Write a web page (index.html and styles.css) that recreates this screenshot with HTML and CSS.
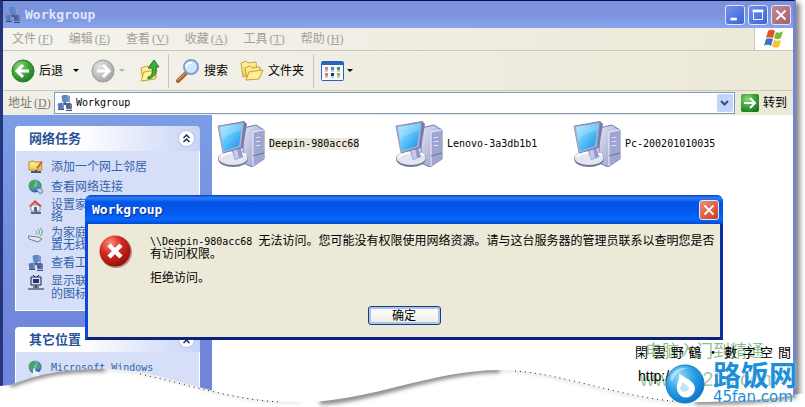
FILE: index.html
```html
<!DOCTYPE html>
<html lang="zh-CN">
<head>
  <meta charset="UTF-8">
  <title>Workgroup</title>
  <link rel="stylesheet" href="styles.css">
</head>
<body>
  <!-- shared icons -->
  <svg class="defs" width="0" height="0" aria-hidden="true">
    <defs>
      <linearGradient id="screen" x1="0" y1="0" x2="1" y2="1">
        <stop offset="0" stop-color="#a4e6ff"/><stop offset="0.5" stop-color="#55c2fa"/><stop offset="1" stop-color="#1c86e2"/>
      </linearGradient>
      <linearGradient id="case" x1="0" y1="0" x2="1" y2="1">
        <stop offset="0" stop-color="#e2e4f6"/><stop offset="1" stop-color="#8d92bd"/>
      </linearGradient>
      <radialGradient id="green" cx="0.35" cy="0.3" r="0.8">
        <stop offset="0" stop-color="#8fdc7c"/><stop offset="0.5" stop-color="#3fa63a"/><stop offset="1" stop-color="#1c7420"/>
      </radialGradient>
      <radialGradient id="gray" cx="0.35" cy="0.3" r="0.8">
        <stop offset="0" stop-color="#e4e4e4"/><stop offset="1" stop-color="#a0a0a0"/>
      </radialGradient>
      <radialGradient id="red" cx="0.35" cy="0.25" r="0.8">
        <stop offset="0" stop-color="#f59080"/><stop offset="0.45" stop-color="#d62a20"/><stop offset="1" stop-color="#8c0f0c"/>
      </radialGradient>
      <radialGradient id="globe" cx="0.35" cy="0.3" r="0.8">
        <stop offset="0" stop-color="#9fd8ff"/><stop offset="1" stop-color="#124a9c"/>
      </radialGradient>
      <linearGradient id="folder" x1="0" y1="0" x2="0" y2="1">
        <stop offset="0" stop-color="#fff5a8"/><stop offset="1" stop-color="#f0cb50"/>
      </linearGradient>
      <symbol id="net" viewBox="0 0 16 16">
        <path d="M8 6v4M4 11l4-3 5 3" stroke="#4a5a80" stroke-width="1.500" fill="none"/>
        <path d="M5 1l5-1 1 6-5 1z" fill="#4a90dc" stroke="#6b7aa4"/>
        <path d="M10 0l3 1v6l-2 0z" fill="#8d97bd"/>
        <path d="M1 9l4-1 1 5-4 1z" fill="#3a80d0" stroke="#6b7aa4"/>
        <path d="M5 8l2 1v5l-2 0z" fill="#7f89b0"/>
        <path d="M9 9l4-1 1 5-4 1z" fill="#3468b4" stroke="#55628a"/>
        <path d="M13 8l2 1v5l-2 1z" fill="#6f7aa2"/>
        <path d="M1 14h6v1H1zM9 15h6v1H9z" fill="#3f4a6c"/>
      </symbol>
      <symbol id="pc" viewBox="0 0 48 46">
        <path d="M26 7l13-3 8 5v29l-12 8-9-4z" fill="url(#case)" stroke="#7379a6"/>
        <path d="M36 11l11-2v29l-11 8z" fill="#a0a6d2"/>
        <path d="M36 11l11-2M36 11v34" stroke="#eef0ff" fill="none"/>
        <path d="M38 16l6-1v2l-6 1zM38 20l6-1v2l-6 1zM38 24l6-1v2l-6 1z" fill="#e4e7fa" stroke="#767daf" stroke-width=".5"/>
        <path d="M36 35l11-3" stroke="#686fa0"/>
        <circle cx="43" cy="36" r="1" fill="#68d26a"/>
        <ellipse cx="16" cy="38" rx="15" ry="8" fill="#73779a"/>
        <ellipse cx="16" cy="37" rx="14.500" ry="7" fill="#e3e5f1"/>
        <path d="M4 36c5-5 18-6 25-2" stroke="#fff" fill="none" stroke-width="2"/>
        <path d="M14 27l9-3 3 12-8 3z" fill="#9299cb"/>
        <path d="M16 28l4-1 2 10-4 1z" fill="#c5c9ec"/>
        <path d="M1 5l26-5 3 3-4 24-19 5z" fill="#747cae"/>
        <path d="M1 5l26-4-3 25-18 6z" fill="#a9b3d8" stroke="#7a84b2" stroke-width=".7"/>
        <path d="M3 6l22-3-3 22-15 5z" fill="url(#screen)"/>
        <path d="M3 6l22-3-1 7C15 11 9 15 5 20z" fill="#fff" opacity=".2"/>
      </symbol>
      <symbol id="earth" viewBox="0 0 16 16">
        <circle cx="7" cy="7" r="6.500" fill="url(#globe)"/>
        <path d="M3 2c3-2 5 0 5 1S5 6 6 8s-1 4-2 3-3-3-3-5 1-3 2-4zM10 3c2 1 3 3 3 5l-3 1-1-3z" fill="#48a94b"/>
      </symbol>
    </defs>
  </svg>

  <div class="page">
    <div class="window">
      <header class="titlebar">
        <svg class="icon" viewBox="0 0 16 16"><use href="#net"/></svg>
        <h1>Workgroup</h1>
        <button class="win-btn" aria-label="最小化"><svg viewBox="0 0 20 20"><path d="M5 13h7v3H5z" fill="#fff"/></svg></button>
        <button class="win-btn" aria-label="最大化"><svg viewBox="0 0 20 20"><path d="M5 6h10v9H5z" fill="none" stroke="#fff"/><path d="M4 4h12v3H4z" fill="#fff"/></svg></button>
        <button class="win-btn close" aria-label="关闭"><svg viewBox="0 0 20 20"><path d="M5 5l10 10M15 5L5 15" stroke="#fff" stroke-width="2"/></svg></button>
      </header>

      <nav class="menubar">
        <button>文件<span class="key">(<u>F</u>)</span></button>
        <button>编辑<span class="key">(<u>E</u>)</span></button>
        <button>查看<span class="key">(<u>V</u>)</span></button>
        <button>收藏<span class="key">(<u>A</u>)</span></button>
        <button>工具<span class="key">(<u>T</u>)</span></button>
        <button>帮助<span class="key">(<u>H</u>)</span></button>
        <div class="flag">
          <svg width="20" height="20" viewBox="0 0 20 20">
            <path d="M4 2c3-2 5-1 7 0l-2 7c-2-1-4-1-7 0z" fill="#e2522b"/>
            <path d="M12 3c2 1 4 1 7-1l-2 7c-3 2-5 1-7 0z" fill="#7dba3c"/>
            <path d="M2 10c3-1 5-1 7 0l-2 7c-2-1-4-2-7 0z" fill="#3b6fc9"/>
            <path d="M10 11c2 1 4 1 7 0l-2 7c-3 1-5 1-7-1z" fill="#f5c52f"/>
          </svg>
        </div>
      </nav>

      <div class="toolbar">
        <button class="tool back">
          <svg width="24" height="24" viewBox="0 0 24 24"><circle cx="12" cy="12" r="11" fill="url(#green)" stroke="#2c7a2c"/><path d="M18 12H7M12 6l-6 6 6 6" fill="none" stroke="#fff" stroke-width="3"/></svg>
          <span>后退</span>
          <i class="arrow"></i>
        </button>
        <button class="tool forward" aria-label="前进" disabled>
          <svg width="24" height="24" viewBox="0 0 24 24"><circle cx="12" cy="12" r="11" fill="url(#gray)" stroke="#9b9b9b"/><path d="M6 12h11M12 6l6 6-6 6" fill="none" stroke="#fff" stroke-width="3"/></svg>
          <i class="arrow"></i>
        </button>
        <button class="tool up" aria-label="向上">
          <svg width="22" height="24" viewBox="0 0 22 24">
            <path d="M2 9l6-2 2 2 7-1v11L4 22z" fill="url(#folder)" stroke="#c79f35"/>
            <path d="M2 22l3-9 13-2-2 9z" fill="#fff1a0" stroke="#cda63c"/>
            <path d="M9 18c4-1 5-4 4-9h-4l6-8 5 7h-3c1 6-2 11-8 12z" fill="#3fae3c" stroke="#1f7a24"/>
          </svg>
        </button>
        <span class="sep"></span>
        <button class="tool search">
          <svg width="24" height="24" viewBox="0 0 24 24">
            <path d="M2 22l8-8" stroke="#a8653a" stroke-width="4" stroke-linecap="round"/>
            <path d="M2 21l7-7" stroke="#e6a877" stroke-width="1"/>
            <circle cx="15" cy="8" r="7" fill="#cdeafd" stroke="#7d9fd2" stroke-width="2"/>
            <path d="M10 8c0-3 3-5 6-4" stroke="#fff" stroke-width="2" fill="none"/>
          </svg>
          <span>搜索</span>
        </button>
        <button class="tool folders">
          <svg width="24" height="22" viewBox="0 0 24 22">
            <path d="M1 3l5-2 2 2 8-1 1 11L3 17z" fill="url(#folder)" stroke="#c9a236"/>
            <path d="M5 8l5-2 2 2 8-1v10L7 20z" fill="url(#folder)" stroke="#c9a236"/>
            <path d="M6 20l3-8 14-2-4 9z" fill="#fff09a" stroke="#c9a236"/>
          </svg>
          <span>文件夹</span>
        </button>
        <span class="sep"></span>
        <button class="tool views" aria-label="查看方式">
          <svg width="23" height="20" viewBox="0 0 23 20">
            <rect x=".5" y=".5" width="22" height="19" rx="1" fill="#f5faff" stroke="#2a62b8"/>
            <path d="M1 1h21v3H1z" fill="#2766c4"/>
            <path d="M4 6h3v3H4z" fill="#d88676"/><path d="M10 6h3v3h-3z" fill="#4f86c0"/><path d="M16 6h3v3h-3z" fill="#4e9a45"/>
            <path d="M4 12h3v3H4z" fill="#dc7a68"/><path d="M10 12h3v3h-3z" fill="#163d70"/><path d="M16 12h3v3h-3z" fill="#b9ab3c"/>
            <path d="M4 10h3M10 10h3M16 10h3M4 16h3M10 16h3M16 16h3" stroke="#9aa5b5"/>
          </svg>
          <i class="arrow"></i>
        </button>
      </div>

      <div class="addressbar">
        <label for="address">地址<span class="key">(<u>D</u>)</span></label>
        <div class="combo">
          <svg class="icon" viewBox="0 0 16 16"><use href="#net"/></svg>
          <input type="text" id="address" value="Workgroup">
          <button aria-label="展开"><svg width="9" height="7" viewBox="0 0 9 7"><path d="M1 1l3.500 3.500L8 1" fill="none" stroke="#35507f" stroke-width="2"/></svg></button>
        </div>
        <button class="go">
          <svg width="18" height="18" viewBox="0 0 18 18"><rect width="18" height="18" rx="2" fill="url(#green)"/><path d="M3 9h10M9 4l5 5-5 5" fill="none" stroke="#fff" stroke-width="2"/></svg>
          <span>转到</span>
        </button>
      </div>

      <div class="content">
        <aside class="sidebar">
          <section class="panel">
            <h2>网络任务
              <button aria-label="折叠"><svg width="17" height="17" viewBox="0 0 17 17"><circle cx="8.500" cy="8.500" r="8" fill="#fff" stroke="#b4bfe0"/><path d="M5.500 8l3-3 3 3M5.500 12l3-3 3 3" fill="none" stroke="#1c2b5c" stroke-width="1.500"/></svg></button>
            </h2>
            <ul>
              <li>
                <svg class="icon" viewBox="0 0 16 16"><path d="M1 3l4-1 1 1h7l1 8H1z" fill="url(#folder)" stroke="#b88a2a"/><path d="M8 9l5-7 2 1-5 7z" fill="#d9633c"/><path d="M3 13h10M8 11v3" stroke="#4d5668" stroke-width="2"/></svg>
                <a href="#">添加一个网上邻居</a>
              </li>
              <li>
                <svg class="icon" viewBox="0 0 16 16"><use href="#earth"/><path d="M8 10l5-1 2 4-3 2z" fill="#c4d0e6" stroke="#6e80a6"/></svg>
                <a href="#">查看网络连接</a>
              </li>
              <li>
                <svg class="icon" viewBox="0 0 16 16"><path d="M3 6h9v6H3z" fill="#f4f4f8" stroke="#8a8fa4"/><path d="M1 7l6-6 7 6-2 1-5-4-5 4z" fill="#d4503a"/><path d="M6 8h3v4H6z" fill="#3b6ca8"/><path d="M3 14h10M8 12v2" stroke="#5d6576" stroke-width="2"/></svg>
                <a href="#">设置家庭或小型办公网<br>络</a>
              </li>
              <li>
                <svg class="icon" viewBox="0 0 16 16"><path d="M0 9l10 1 4 2-4 3-9-3z" fill="#e4e7ee" stroke="#747c8f"/><path d="M8 4c1 1 1 2 0 3M10 2c2 2 2 4 0 6M12 1c3 2 3 6 0 8" stroke="#4eaa50" fill="none"/></svg>
                <a href="#">为家庭或小型办公室设<br>置无线网络</a>
              </li>
              <li>
                <svg class="icon" viewBox="0 0 16 16"><use href="#net"/></svg>
                <a href="#">查看工作组计算机</a>
              </li>
              <li>
                <svg class="icon" viewBox="0 0 16 16"><path d="M5 0l2 2M11 0L9 2" stroke="#222"/><path d="M3 2h10v8H3z" fill="#dfe2ec" stroke="#222"/><path d="M5 4h6v4H5z" fill="#1c2f9c"/><path d="M8 10v3M0 14h16M5 12h6" stroke="#222"/></svg>
                <a href="#">显示联网 <span class="latin">UPnP</span> 设备<br>的图标</a>
              </li>
            </ul>
          </section>
          <section class="panel rest">
            <h2>其它位置
              <button aria-label="折叠"><svg width="17" height="17" viewBox="0 0 17 17"><circle cx="8.500" cy="8.500" r="8" fill="#fff" stroke="#b4bfe0"/><path d="M5.500 8l3-3 3 3M5.500 12l3-3 3 3" fill="none" stroke="#1c2b5c" stroke-width="1.500"/></svg></button>
            </h2>
            <ul>
              <li>
                <svg class="icon" viewBox="0 0 16 16"><use href="#earth"/><path d="M5 16V9l2-1v3l4 1v4z" fill="#eef1f8"/></svg>
                <a href="#" class="latin">Microsoft Windows</a>
              </li>
            </ul>
          </section>
        </aside>

        <main class="files">
          <a href="#" class="file selected"><svg width="48" height="46"><use href="#pc"/></svg><span>Deepin-980acc68</span></a>
          <a href="#" class="file"><svg width="48" height="46"><use href="#pc"/></svg><span>Lenovo-3a3db1b1</span></a>
          <a href="#" class="file"><svg width="48" height="46"><use href="#pc"/></svg><span>Pc-200201010035</span></a>
        </main>

        <div class="dialog" role="alertdialog" aria-labelledby="dialog-title">
          <header>
            <h2 id="dialog-title">Workgroup</h2>
            <button class="win-btn close" aria-label="关闭"><svg viewBox="0 0 20 20"><path d="M5 5l10 10M15 5L5 15" stroke="#fff" stroke-width="2"/></svg></button>
          </header>
          <div class="dialog-body">
            <div class="message">
              <svg width="34" height="34" viewBox="0 0 34 34"><circle cx="17" cy="17" r="16" fill="#6e0f0d" opacity=".4"/><circle cx="16" cy="16" r="15.500" fill="url(#red)"/><path d="M10 10l12 12M22 10L10 22" stroke="#fff" stroke-width="4.500"/></svg>
              <div>
                <p><span class="latin">\\Deepin-980acc68 </span>无法访问。您可能没有权限使用网络资源。请与这台服务器的管理员联系以查明您是否有访问权限。</p>
                <p>拒绝访问。</p>
              </div>
            </div>
            <button class="ok">确定</button>
          </div>
        </div>
      </div>
    </div>

    <!-- torn bottom edge -->
    <svg class="wave" viewBox="0 0 805 40" preserveAspectRatio="none" aria-hidden="true">
      <defs>
        <clipPath id="below"><path d="M0 19L10 18C40 7 60 2 105 2C165 2 215 35 300 35C370 35 430 3 500 3C560 3 620 34 695 35C740 35 775 32 805 26V40H0z"/></clipPath>
        <filter id="soft" x="-5%" y="-50%" width="110%" height="200%"><feGaussianBlur stdDeviation="2"/></filter>
      </defs>
      <path d="M0 19L10 18C40 7 60 2 105 2C165 2 215 35 300 35C370 35 430 3 500 3C560 3 620 34 695 35C740 35 775 32 805 26V40H0z" fill="#fff"/>
      <g clip-path="url(#below)">
        <path d="M10 18C40 7 60 2 105 2M320 35C377 32 437 3 500 3M695 35C740 35 775 32 796 28" fill="none" stroke="#777" stroke-width="5" filter="url(#soft)"/>
        <path d="M105 2C165 2 215 35 300 35M500 3C560 3 620 34 695 35" fill="none" stroke="#ccc" stroke-width="2" filter="url(#soft)"/>
      </g>
      <path d="M140 7C190 18 235 33 280 35M515 4C570 8 625 32 685 35" fill="none" stroke="#222" stroke-dasharray="1 4"/>
    </svg>

    <div class="watermark">
      <p class="site-bg">电脑入门到精通</p>
      <p class="url-bg">www.ic22c.com</p>
      <p class="studio"><span>閑</span><span>雲</span><span>野</span><span>鶴</span><span>・</span><span>數</span><span>字</span><span>空</span><span>間</span></p>
      <p class="studio-url">http://</p>
      <div class="logo">
        <svg width="40" height="40" viewBox="0 0 40 40">
          <defs><radialGradient id="ball" cx=".35" cy=".3" r=".8"><stop offset="0" stop-color="#8fdcfb"/><stop offset=".5" stop-color="#2a9fe4"/><stop offset="1" stop-color="#0b6cc0"/></radialGradient></defs>
          <circle cx="20" cy="20" r="19" fill="url(#ball)" stroke="#1279c8"/>
          <path d="M14 8c1 5 15 7 16 16a9 9 0 0 1-18 1c-1-7 4-10 2-17z" fill="#fff"/>
          <path d="M17 17c1 3 7 4 7 8a5 5 0 0 1-9 0c0-3 3-4 2-8z" fill="#bfe3f8"/>
          <path d="M5 14C8 6 16 3 23 4 15 6 10 10 7 18z" fill="#fff" opacity=".45"/>
        </svg>
        <div>
          <strong>路饭网</strong>
          <small>45fan.com</small>
        </div>
      </div>
    </div>
  </div>
</body>
</html>
```
FILE: styles.css
```css
* {
  box-sizing: border-box;
}

body {
  margin: 0;
  background: #fff;
  color: #000;
  font: 12px/12px "Liberation Sans", "Noto Sans CJK SC", sans-serif;
}

h1, h2, p, ul {
  margin: 0;
  padding: 0;
}

button, input {
  margin: 0;
  padding: 0;
  border: none;
  background: none;
  color: inherit;
  font: inherit;
}

a {
  color: inherit;
  text-decoration: none;
}

svg {
  display: block;
  flex: none;
}

.defs {
  position: absolute;
}

.icon {
  width: 16px;
  height: 16px;
}

.latin {
  font-family: "DejaVu Sans Mono", "Noto Sans CJK SC", monospace;
  font-size: 10px;
}

.key {
  font-family: "Liberation Serif", serif;
  margin-left: 2px;
}

.page {
  position: relative;
  display: flex;
  min-height: 100vh;
  padding-right: 9px;
  overflow: hidden;
}

/* explorer window */
.window {
  flex: 1;
  display: flex;
  flex-direction: column;
  min-width: 0;
  border: solid #7784d2;
  border-width: 1px 3px 0 3px;
  border-top-color: #0a0f46;
  border-left-color: #26367c;
  background: #ece9d8;
  box-shadow: 4px 3px 5px #888;
}

.titlebar {
  display: flex;
  align-items: center;
  gap: 3px;
  height: 27px;
  padding: 0 2px;
  background: linear-gradient(#7b93dd, #7d92dd 50%, #87a5ee);
  color: #dfe6fa;
}

.titlebar h1 {
  flex: 1;
  margin-left: 1px;
}

.titlebar h1, .dialog h2 {
  font: bold 13px/16px "DejaVu Sans Mono", monospace;
}

.win-btn {
  width: 20px;
  height: 20px;
  border: 1px solid #dfe6fb;
  border-radius: 3px;
  background: linear-gradient(135deg, #6f92ee, #3f63d4);
}

.win-btn svg {
  width: 18px;
  height: 18px;
}

.titlebar .close {
  background: linear-gradient(135deg, #c28a94, #a3606c);
}

.menubar {
  display: flex;
  gap: 16px;
  height: 23px;
  padding-left: 9px;
  border-bottom: 1px solid #cbc8b8;
  background: linear-gradient(90deg, #f4f3ee, #ece9d8);
  color: #a3a195;
}

.flag {
  display: flex;
  align-items: center;
  justify-content: center;
  width: 39px;
  margin-left: auto;
  border-left: 1px solid #cbc8b8;
  background: #fff;
}

.toolbar {
  display: flex;
  align-items: center;
  height: 40px;
  padding-left: 8px;
  border-bottom: 1px solid #cbc8b8;
  background: linear-gradient(90deg, #f3f2ec, #ece9d8);
}

.tool {
  display: flex;
  align-items: center;
  gap: 4px;
}

.arrow {
  border: 3px solid transparent;
  border-top-color: currentColor;
  border-bottom-width: 0;
}

.back .arrow {
  margin-left: 6px;
}

.forward {
  margin-left: 12px;
  color: #b5b5ad;
}

.up {
  margin-left: 14px;
}

.sep {
  width: 1px;
  height: 34px;
  margin: 0 7px;
  background: #cbc8b8;
}

.search {
  margin-right: 12px;
}

.folders {
  margin-right: 2px;
}

.views {
  gap: 3px;
}

.addressbar {
  display: flex;
  align-items: center;
  height: 24px;
  padding: 0 6px 0 5px;
  background: linear-gradient(90deg, #f0efe7, #ece9d8);
}

.addressbar label {
  width: 46px;
  color: #7e7c70;
}

.combo {
  flex: 1;
  display: flex;
  align-items: center;
  height: 22px;
  padding-left: 2px;
  border: 1px solid #7f9db9;
  background: #fff;
}

.combo input {
  flex: 1;
  min-width: 0;
  margin-left: 3px;
  font: 10px/16px "DejaVu Sans Mono", monospace;
}

.combo button {
  display: flex;
  align-items: center;
  justify-content: center;
  width: 16px;
  height: 18px;
  margin-right: 1px;
  border-radius: 2px;
  background: #c3d3fd;
}

.go {
  display: flex;
  align-items: center;
  gap: 4px;
  margin-left: 6px;
}

.content {
  position: relative;
  flex: 1;
  display: flex;
  background: #fff;
}

/* task pane */
.sidebar {
  display: flex;
  flex-direction: column;
  gap: 16px;
  width: 209px;
  padding: 11px 12px 0;
  background: linear-gradient(#7c9de6, #7088da 60%, #6f84dc);
}

.panel h2 {
  display: flex;
  align-items: center;
  justify-content: space-between;
  height: 25px;
  padding: 0 5px 0 14px;
  border-radius: 4px 4px 0 0;
  background: linear-gradient(90deg, #fff 35%, #c8d4f7);
  color: #2a5296;
  font-size: 13px;
  line-height: 16px;
}

.panel ul {
  display: flex;
  flex-direction: column;
  gap: 4px;
  padding: 8px 12px 10px;
  border: 1px solid #fff;
  border-top: none;
  background: #d6dff7;
  list-style: none;
}

.panel li {
  display: flex;
  gap: 7px;
}

.panel a {
  color: #3563ab;
  white-space: nowrap;
}

.panel li:nth-child(-n+2) a, .panel li:nth-child(5) a {
  padding: 2px 0;
}

.rest {
  flex: 1;
  display: flex;
  flex-direction: column;
}

.rest ul {
  flex: 1;
}

/* computers */
.files {
  flex: 1;
  display: grid;
  grid-template-columns: repeat(auto-fill, 178px);
  align-content: start;
  padding: 6px 5px;
}

.file {
  display: flex;
  align-items: center;
  gap: 4px;
  font: 10px/12px "DejaVu Sans Mono", monospace;
}

.selected span {
  background: #ece9d8;
}

/* error box, floats over the window */
.dialog {
  position: absolute;
  top: 80px;
  left: 82px;
  right: 70px;
  border: 3px solid #1238b8;
  border-color: #0a50e0 #0c2ea0 #0c2080 #0a48d8;
  border-top-width: 0;
  border-radius: 7px 7px 0 0;
  background: #ece9d8;
}

.dialog header {
  display: flex;
  align-items: center;
  justify-content: space-between;
  height: 29px;
  margin: 0 -3px;
  padding: 0 4px 0 7px;
  border-radius: 6px 6px 0 0;
  background: linear-gradient(#0a3fc4, #2a80fa 10%, #0453e4 25%, #0458ee 60%, #0668fe 85%, #0348cc);
  color: #fff;
}

.dialog h2 {
  text-shadow: 1px 1px #0a2a80;
}

.dialog .close {
  background: linear-gradient(135deg, #f09078, #c93a20);
}

.dialog-body {
  padding: 11px 0 12px;
}

.message {
  display: flex;
  gap: 17px;
  min-height: 71px;
  padding-left: 11px;
}

.message p + p {
  margin-top: 12px;
}

.ok {
  display: block;
  width: 73px;
  height: 19px;
  margin: 0 auto;
  border: 1px solid #1c3c78;
  border-radius: 3px;
  background: linear-gradient(#fff, #eeece2);
  box-shadow: inset 0 0 0 2px #a9c4f0;
}

/* page edge and marks lie over everything */
.wave {
  position: absolute;
  left: 0;
  bottom: 0;
  width: 100%;
  height: 40px;
}

.watermark {
  position: absolute;
  right: 8px;
  bottom: 3px;
  width: 162px;
  height: 62px;
}

.watermark p {
  position: absolute;
  left: 5px;
  white-space: nowrap;
}

.watermark .site-bg {
  top: 1px;
  left: 10px;
  color: #8fbf8f;
  font-size: 17px;
  line-height: 17px;
}

.watermark .url-bg {
  top: 27px;
  color: #a3c8a3;
  font-size: 20px;
  line-height: 20px;
}

.watermark .studio {
  top: 2px;
  left: 0;
  right: 6px;
  display: flex;
  justify-content: space-between;
  font-family: "Noto Sans CJK TC", sans-serif;
  font-size: 13px;
  line-height: 16px;
}

.watermark .studio-url {
  top: 26px;
  left: 3px;
  font-size: 14px;
  line-height: 16px;
}

.logo {
  position: absolute;
  right: 0;
  bottom: 0;
  display: flex;
  align-items: center;
  gap: 8px;
  color: #1b8fdc;
}

.logo strong {
  display: block;
  font-size: 28px;
  line-height: 26px;
  text-shadow: 0 0 2px #fff;
}

.logo small {
  display: block;
  font: 15px/14px "DejaVu Sans", sans-serif;
  text-shadow: 0 0 2px #fff;
}
```
